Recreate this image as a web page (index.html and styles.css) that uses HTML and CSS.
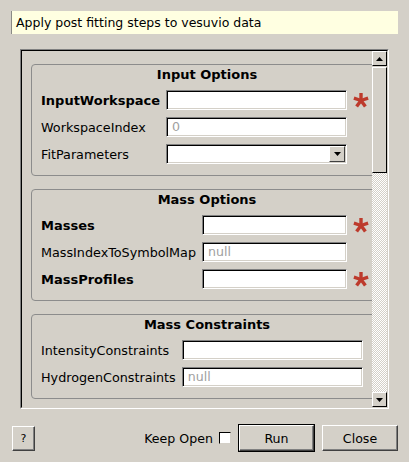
FILE: index.html
```html
<!DOCTYPE html>
<html>
<head>
<meta charset="utf-8">
<link rel="stylesheet" href="styles.css">
</head>
<body>
<div class="dialog">
  <div class="summary">Apply post fitting steps to vesuvio data</div>

  <div class="frame">
    <div class="frame-inner">
      <div class="viewport">
        <div class="content">
          <div class="group">
            <div class="group-title">Input Options</div>
            <div class="grid">
              <div class="label bold">InputWorkspace</div>
              <div class="field"></div>
              <div class="req"><svg viewBox="0 0 16 16" width="16" height="16"><g stroke="#bd3a2c" stroke-width="3.4" stroke-linecap="butt"><line x1="8" y1="8.5" x2="8" y2="1"/><line x1="8" y1="8.5" x2="15.1" y2="6.2"/><line x1="8" y1="8.5" x2="12.4" y2="14.6"/><line x1="8" y1="8.5" x2="3.6" y2="14.6"/><line x1="8" y1="8.5" x2="0.9" y2="6.2"/></g></svg></div>

              <div class="label">WorkspaceIndex</div>
              <div class="field"><span class="ph">0</span></div>
              <div></div>

              <div class="label">FitParameters</div>
              <div class="field combo"><span class="combo-btn"><svg viewBox="0 0 7 4" width="7" height="4"><path d="M0 0H7L3.5 4Z" fill="#000"/></svg></span></div>
              <div></div>
            </div>
          </div>

          <div class="group">
            <div class="group-title">Mass Options</div>
            <div class="grid">
              <div class="label bold">Masses</div>
              <div class="field"></div>
              <div class="req"><svg viewBox="0 0 16 16" width="16" height="16"><g stroke="#bd3a2c" stroke-width="3.4"><line x1="8" y1="8.5" x2="8" y2="1"/><line x1="8" y1="8.5" x2="15.1" y2="6.2"/><line x1="8" y1="8.5" x2="12.4" y2="14.6"/><line x1="8" y1="8.5" x2="3.6" y2="14.6"/><line x1="8" y1="8.5" x2="0.9" y2="6.2"/></g></svg></div>

              <div class="label">MassIndexToSymbolMap</div>
              <div class="field"><span class="ph">null</span></div>
              <div></div>

              <div class="label bold">MassProfiles</div>
              <div class="field"></div>
              <div class="req"><svg viewBox="0 0 16 16" width="16" height="16"><g stroke="#bd3a2c" stroke-width="3.4"><line x1="8" y1="8.5" x2="8" y2="1"/><line x1="8" y1="8.5" x2="15.1" y2="6.2"/><line x1="8" y1="8.5" x2="12.4" y2="14.6"/><line x1="8" y1="8.5" x2="3.6" y2="14.6"/><line x1="8" y1="8.5" x2="0.9" y2="6.2"/></g></svg></div>
            </div>
          </div>

          <div class="group">
            <div class="group-title">Mass Constraints</div>
            <div class="grid two">
              <div class="label">IntensityConstraints</div>
              <div class="field"></div>

              <div class="label">HydrogenConstraints</div>
              <div class="field"><span class="ph">null</span></div>
            </div>
          </div>
        </div>
      </div>

      <div class="scrollbar">
        <div class="sb-btn"><svg viewBox="0 0 7 4" width="7" height="4"><path d="M0 4H7L3.5 0Z" fill="#000"/></svg></div>
        <div class="sb-thumb"></div>
        <div class="sb-track"></div>
        <div class="sb-btn"><svg viewBox="0 0 7 4" width="7" height="4"><path d="M0 0H7L3.5 4Z" fill="#000"/></svg></div>
      </div>
    </div>
  </div>

  <div class="buttons">
    <div class="btn help">?</div>
    <div class="spacer"></div>
    <div class="keep">Keep Open</div>
    <div class="check"></div>
    <div class="btn-default"><div class="btn run">Run</div></div>
    <div class="btn close">Close</div>
  </div>
</div>
</body>
</html>
```

FILE: styles.css
```css
html, body {
  margin: 0;
  padding: 0;
  background: #d4d0c8;
}
body {
  font-family: "DejaVu Sans", sans-serif;
  font-size: 12.6px;
  color: #000;
  width: 409px;
  height: 462px;
  overflow: hidden;
}
.dialog {
  display: flex;
  flex-direction: column;
  padding: 11px 11px 0 11px;
}
.summary {
  height: 23px;
  line-height: 23px;
  background: #ffffe1;
  border-left: 1px solid #8a8a86;
  padding-left: 4px;
  font-size: 12.5px;
}
.frame {
  margin: 15px 0 0 9px;
  width: 367px;
  height: 358px;
  border: 1px solid;
  border-color: #808080 #ffffff #ffffff #808080;
}
.frame-inner {
  display: flex;
  height: 356px;
  border: 1px solid;
  border-color: #000000 #d4d0c8 #d4d0c8 #000000;
}
.viewport {
  width: 350px;
  overflow: hidden;
}
.content {
  width: 360px;
  padding: 13px 0 0 9px;
  display: flex;
  flex-direction: column;
  gap: 13px;
}
.group {
  width: 322px;
  border: 1px solid #8c8c8c;
  border-radius: 4px;
  padding: 0 19px 11px 9px;
}
.group-title {
  margin: 0 -19px 0 -9px;
  height: 20px;
  line-height: 20px;
  text-align: center;
  font-weight: bold;
  font-size: 13px;
}
.grid {
  display: grid;
  grid-template-columns: auto 1fr 10px;
  column-gap: 6px;
  row-gap: 7px;
  margin-top: 5px;
  align-items: center;
}
.grid.two {
  grid-template-columns: auto 1fr;
}
.label {
  white-space: nowrap;
  color: #000;
  font-size: 12.75px;
}
.label.bold {
  font-weight: bold;
  font-size: 13px;
}
.field {
  position: relative;
  height: 18px;
  background: #fff;
  border: 1px solid;
  border-color: #808080 #ffffff #ffffff #808080;
  box-shadow: inset 1px 1px 0 #000, inset -1px -1px 0 #d4d0c8;
  padding-left: 5px;
  line-height: 18px;
}
.ph {
  color: #a0a0a0;
}
.combo-btn {
  position: absolute;
  right: 1px;
  top: 1px;
  width: 14px;
  height: 14px;
  background: #d4d0c8;
  border: 1px solid;
  border-color: #ffffff #404040 #404040 #ffffff;
  display: flex;
  align-items: center;
  justify-content: center;
}
.req {
  width: 10px;
  height: 16px;
  overflow: visible;
}
.req svg {
  display: block;
}
.scrollbar {
  width: 15px;
  display: flex;
  flex-direction: column;
}
.sb-btn {
  height: 13px;
  background: #d4d0c8;
  border: 1px solid;
  border-color: #ffffff #000000 #000000 #ffffff;
  display: flex;
  align-items: center;
  justify-content: center;
}
.sb-thumb {
  height: 104px;
  margin-top: 1px;
  background: #d4d0c8;
  border: 1px solid;
  border-color: #ffffff #000000 #000000 #ffffff;
}
.sb-track {
  flex: 1;
  background: repeating-conic-gradient(#ffffff 0 25%, #d4d0c8 0 50%) 0 0 / 2px 2px;
}
.buttons {
  display: flex;
  align-items: center;
  margin-top: 15px;
  height: 28px;
  padding-left: 1px;
}
.spacer {
  flex: 1;
}
.btn {
  box-sizing: border-box;
  display: flex;
  align-items: center;
  justify-content: center;
  background: #d4d0c8;
  border: 1px solid;
  border-color: #ffffff #404040 #404040 #ffffff;
  box-shadow: inset -1px -1px 0 #808080;
}
.help {
  width: 23px;
  height: 25px;
  font-size: 11px;
}
.keep {
  margin-right: 6px;
}
.check {
  width: 10px;
  height: 10px;
  background: #fff;
  border: 1px solid;
  border-color: #000 #d4d0c8 #d4d0c8 #000;
  margin-right: 7px;
}
.btn-default {
  border: 1px solid #000;
  margin-right: 7px;
}
.run {
  width: 75px;
  height: 26px;
}
.close {
  width: 76px;
  height: 26px;
}
```
